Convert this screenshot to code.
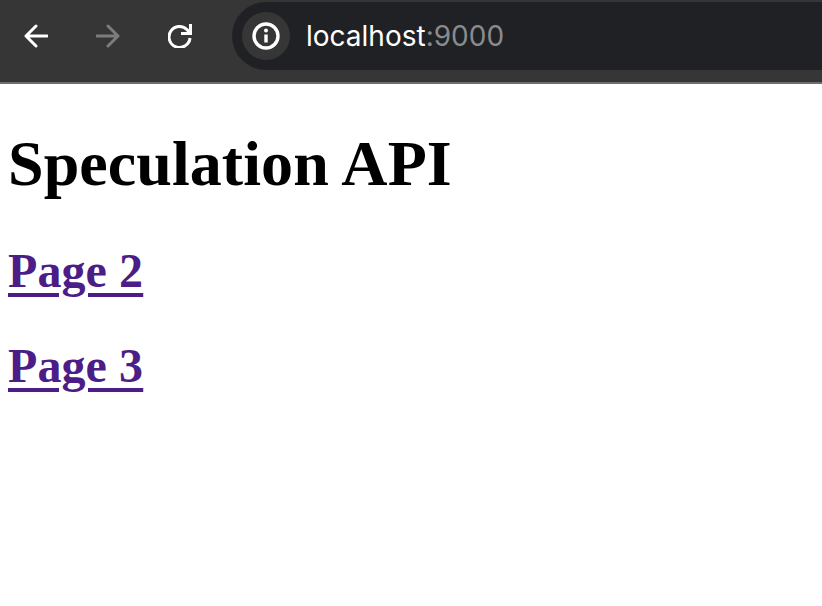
<div class="toolbar">
  <div class="nav">
    <svg class="icon" viewBox="0 0 24 24" width="24" height="24" aria-hidden="true"><path d="M23 12H2M12 2 2 12l10 10" /></svg>
    <svg class="icon dim" viewBox="0 0 24 24" width="24" height="24" aria-hidden="true"><path d="M1 12h21M12 2l10 10-10 10" /></svg>
    <svg class="icon reload" viewBox="0 0 24 24" width="24" height="24" aria-hidden="true"><path d="M22 14a10.500 10.500 0 1 1-2.800-8.200L21 8" /><path class="fill" d="M24 0V11H13V8H21V0Z" /></svg>
  </div>
  <div class="omnibox">
    <div class="chip">
      <svg viewBox="0 0 28 28" width="28" height="28" aria-hidden="true"><circle cx="14" cy="14" r="12" /><path class="stem" d="M14 12.500v8" /><circle class="dot" cx="14" cy="8.500" r="2" /></svg>
    </div>
    <div class="url">localhost<span class="port">:9000</span></div>
  </div>
</div>
<main>
  <h1>Speculation API</h1>
  <h2><a href="#page2">Page 2</a></h2>
  <h2><a href="#page3">Page 3</a></h2>
</main>

<style>
  :global(body) {
    margin: 0;
    background: #fff;
    font-family: "Liberation Serif", "Times New Roman", serif;
  }
  .toolbar {
    display: flex;
    height: 84px;
    box-sizing: border-box;
    padding-top: 2px;
    background: #363636;
    border-bottom: 2px solid #6e6e6e;
  }
  .nav {
    display: flex;
    align-items: center;
    gap: 48px;
    width: 232px;
    height: 68px;
    box-sizing: border-box;
    padding-left: 24px;
    flex: none;
  }
  .icon {
    fill: none;
    stroke: #fff;
    stroke-width: 3;
    stroke-linecap: round;
    stroke-linejoin: round;
  }
  .icon.dim { stroke: #7c7c7c; }
  .icon.reload { stroke-linecap: butt; }
  .icon .fill { fill: #fff; stroke: none; }
  .omnibox {
    flex: 1;
    display: flex;
    align-items: center;
    height: 68px;
    padding-left: 10px;
    background: #202124;
    border-radius: 34px 0 0 34px;
  }
  .chip {
    width: 48px;
    height: 48px;
    border-radius: 50%;
    background: #363636;
    display: flex;
    align-items: center;
    justify-content: center;
  }
  .chip svg { fill: none; stroke: #fff; stroke-width: 3.4; }
  .chip .stem { stroke-width: 3.4; }
  .chip .dot { fill: #fff; stroke: none; }
  .url {
    margin-left: 16px;
    color: #fff;
    font: 28px Inter, "Liberation Sans", sans-serif;
  }
  .port { color: #8a8b8d; }
  main { padding: 0 8px; }
  h1 { font-size: 64px; margin: 43px 0 42px; letter-spacing: 0.07px; }
  h2 { font-size: 48px; margin: 40px 0; letter-spacing: 0.1px; }
  a {
    color: #4c1d87;
    text-decoration-thickness: 4px;
    text-underline-offset: 6px;
  }
</style>
